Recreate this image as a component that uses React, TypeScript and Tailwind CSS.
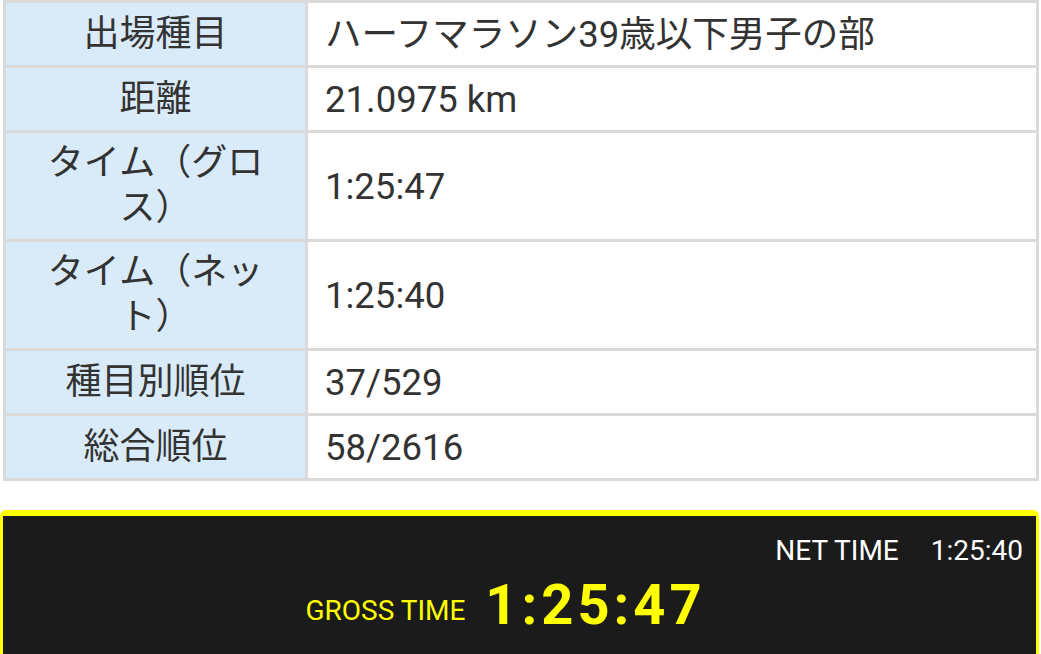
const rows: { label: string; value: string }[] = [
  { label: "出場種目", value: "ハーフマラソン39歳以下男子の部" },
  { label: "距離", value: "21.0975 km" },
  { label: "タイム（グロス）", value: "1:25:47" },
  { label: "タイム（ネット）", value: "1:25:40" },
  { label: "種目別順位", value: "37/529" },
  { label: "総合順位", value: "58/2616" },
];

export default function App() {
  return (
    <div className="min-h-screen w-[1041px] overflow-hidden bg-white font-['Roboto','Noto_Sans_CJK_JP',sans-serif] text-[#333333]">
      <div className="ml-[3px] grid w-[1036px] grid-cols-[299px_1fr] gap-[3px] bg-[#dadada] p-[3px]">
        {rows.map((row) => (
          <div key={row.label} className="contents">
            <div className="flex min-h-[62px] items-center justify-center bg-[#d9ebf8] px-[30px] py-2 text-center text-[36px] leading-[45px]">
              {row.label}
            </div>
            <div className="flex min-h-[62px] items-center bg-white pl-[17px] pr-4 text-[36.5px] leading-[45px]">
              {row.value}
            </div>
          </div>
        ))}
      </div>

      <div className="mt-[29px] h-[160px] w-[1039px] rounded-[6px] border-x-[3px] border-t-[6px] border-[#ffff00] bg-[#1b1b1b] pt-[17px]">
        <div className="flex items-center justify-end gap-8 pr-[13px] text-[28px] leading-[36px] text-white">
          <span>NET TIME</span>
          <span>1:25:40</span>
        </div>
        <div className="mt-[4px] flex items-baseline justify-center gap-5 pr-[28px] text-[#ffff00]">
          <span className="relative -top-[4px] text-[28px]">GROSS TIME</span>
          <span className="text-[56px] font-bold leading-[64px] tracking-[4px]">1:25:47</span>
        </div>
      </div>
    </div>
  );
}
